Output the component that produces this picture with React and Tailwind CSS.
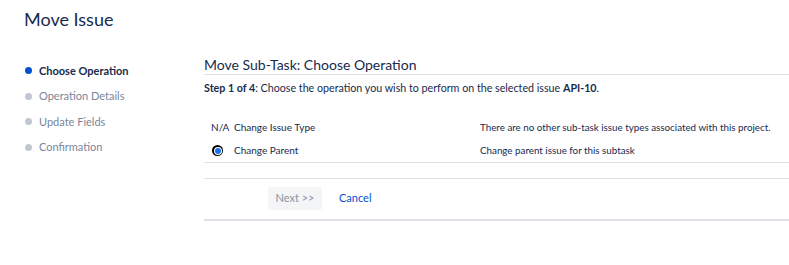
const steps = [
  { label: 'Choose Operation', active: true },
  { label: 'Operation Details' },
  { label: 'Update Fields' },
  { label: 'Confirmation' },
];

const App = () => {
  return (
    <div className="w-[789px] h-[265px] bg-white text-[#172b4d] overflow-hidden" style={{ fontFamily: 'Lato, "Open Sans", sans-serif' }}>
      <h1 className="pl-[24px] pt-[7px] text-[18px] leading-[24px] text-[#172b4d]">Move Issue</h1>

      <div className="flex mt-[25px]">
        {/* steps */}
        <ul className="w-[204px] shrink-0 pl-[25px] pt-[2px]">
          {steps.map((s) => (
            <li key={s.label} className="flex items-center h-[25.5px]">
              <span className={`w-[7px] h-[7px] rounded-full mr-[7px] ${s.active ? 'bg-[#0052cc]' : 'bg-[#c1c7d0]'}`} />
              <span className={`text-[11px] ${s.active ? 'font-bold text-[#172b4d]' : 'text-[#7a869a]'}`}>{s.label}</span>
            </li>
          ))}
        </ul>

        {/* main */}
        <div className="flex-1 min-w-0">
          <h2 className="text-[14px] leading-[18px] border-b border-[#dfe1e6]">Move Sub-Task: Choose Operation</h2>
          <p className="text-[10.7px] mt-[5px] leading-[16px]">
            <span className="font-bold">Step 1 of 4</span>: Choose the operation you wish to perform on the selected issue <span className="font-bold">API-10</span>.
          </p>

          <div className="mt-[19px] text-[10px] text-[#172b4d]">
            <div className="flex items-center h-[24px]">
              <span className="w-[30px] pl-[7px]">N/A</span>
              <span className="w-[246px]">Change Issue Type</span>
              <span className="whitespace-nowrap text-[9.8px]">There are no other sub-task issue types associated with this project.</span>
            </div>
            <div className="flex items-center h-[24px] border-b border-[#dfe1e6]">
              <span className="w-[30px] pl-[8px] flex">
                <span className="w-[11px] h-[11px] rounded-full bg-black flex items-center justify-center">
                  <span className="w-[8px] h-[8px] rounded-full bg-white flex items-center justify-center">
                    <span className="w-[6px] h-[6px] rounded-full bg-[#1a73e8]" />
                  </span>
                </span>
              </span>
              <span className="w-[246px]">Change Parent</span>
              <span className="text-[9.8px]">Change parent issue for this subtask</span>
            </div>
          </div>

          <div className="mt-[15px] border-t border-[#dfe1e6] border-b-2 border-b-[#dfe1e6] pt-[8px] pb-[9px] pl-[64px] flex items-center gap-[17px]">
            <button className="h-[23px] w-[54px] rounded-[3px] bg-[#f4f5f7] text-[11px] text-[#8993a4]">Next &gt;&gt;</button>
            <a className="text-[11px] text-[#0052cc]">Cancel</a>
          </div>
        </div>
      </div>
    </div>
  );
};

export default App;
